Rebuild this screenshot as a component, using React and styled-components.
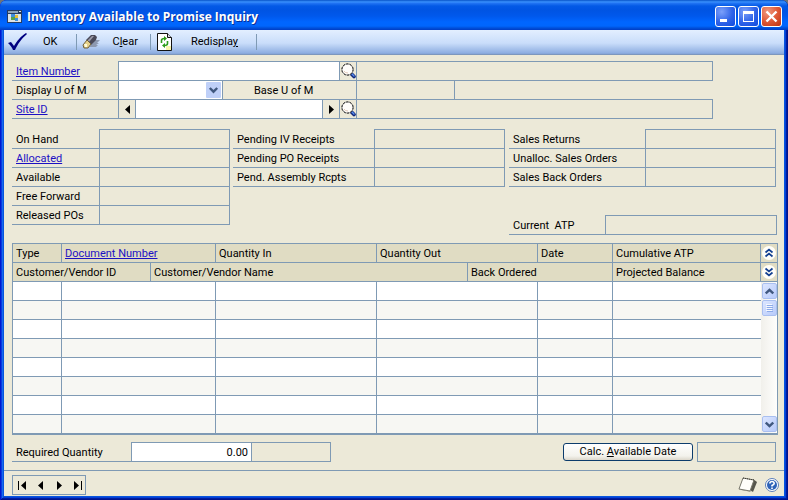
import React from "react";
import styled, { createGlobalStyle, css } from "styled-components";

const line = "#7f9ab4";
const face = "#ece9d8";

const Global = createGlobalStyle`
  *, *::before, *::after { box-sizing: border-box; }
  body {
    margin: 0;
    background: #6f7477;
    color: #000;
    font: 11px/16px Roboto, "Liberation Sans", sans-serif;
  }
  button, input, select { font: inherit; color: inherit; margin: 0; }
  button { padding: 0; border: 0; background: none; }
  svg { display: block; }
`;

const Window = styled.div`
  display: flex;
  flex-direction: column;
  min-height: 100vh;
  padding: 0 4px 4px;
  border-radius: 7px 7px 0 0;
  overflow: hidden;
  background: #0855dd;
  box-shadow: inset 1px 0 #0019cf, inset -1px -1px #00138c, inset 2px 0 #0a3be0,
    inset -2px -2px #001ea0, inset 3px 0 #166aee, inset -3px -3px #0441d8;
`;

const TitleBar = styled.header`
  display: flex;
  align-items: center;
  gap: 5px;
  height: 30px;
  margin: 0 -4px;
  padding: 3px 6px 0 7px;
  background: linear-gradient(#0753c8 0, #3b93ff 2px, #2376f4 3px, #0359e6 6px, #0054e3 10px, #0058ec 16px, #0066ff 22px, #0066fd 26px, #0050da 28px, #003cc4 30px);
`;

const Title = styled.h1`
  flex: 1;
  margin: 0;
  color: #fff;
  font: 700 12px/18px "Open Sans", "Noto Sans", sans-serif;
  text-shadow: 1px 1px #0a2f96;
  white-space: nowrap;
`;

const Caption = styled.div`
  display: flex;
  gap: 2px;
`;

const CaptionButton = styled.button`
  width: 21px;
  height: 21px;
  border: 1px solid #fff;
  border-radius: 3px;
  background: ${(p) =>
    p.$close
      ? "radial-gradient(circle at 30% 25%, #ef9a80, #e05a38 50%, #bd3210)"
      : "radial-gradient(circle at 30% 25%, #7ba0fa, #2f63e8 55%, #0f4ade)"};
`;

const Toolbar = styled.div`
  display: flex;
  height: 25px;
  border-bottom: 1px solid #7d97bd;
  background: linear-gradient(#e3efff, #c9ddfa 55%, #8fafe2 95%, #84a3d6);
`;

const Tool = styled.button`
  display: flex;
  align-items: center;
  gap: ${(p) => p.$gap}px;
  padding: 0 ${(p) => p.$end}px 0 ${(p) => p.$start}px;
`;

const Divider = styled.span`
  align-self: center;
  width: 1px;
  height: 16px;
  background: ${line};
`;

const Body = styled.main`
  display: flex;
  flex-direction: column;
  flex: 1;
  padding: 7px 6px 0 8px;
  background: ${face};
`;

const Form = styled.section`
  margin-right: 65px;
`;

const Row = styled.div`
  display: flex;
  height: 19px;
`;

const Label = styled.label`
  flex: 0 0 ${(p) => p.$width}px;
  padding: 2px 0 0 ${(p) => p.$indent ?? 4}px;
  border-bottom: 1px solid ${line};
  border-right: ${(p) => (p.$divided ? `1px solid ${line}` : "0")};
  white-space: pre;
`;

const Link = styled.a`
  color: #1c10c4;
  text-decoration: underline;
`;

const cell = css`
  min-width: 0;
  height: 20px;
  margin-top: -1px;
  border: 1px solid ${line};
  border-left-width: ${(p) => (p.$joined ? 0 : 1)}px;
  border-radius: 0;
  outline: 0;
`;

const Field = styled.input`
  ${cell}
  flex: ${(p) => (p.$width ? `0 0 ${p.$width}px` : "1 1 0")};
  width: 0;
  padding: 0 3px;
  background: ${(p) => (p.readOnly ? "transparent" : "#fff")};
  text-align: ${(p) => (p.$number ? "right" : "left")};
`;

const CellButton = styled.button`
  ${cell}
  display: flex;
  flex: 0 0 ${(p) => p.$width ?? 17}px;
  align-items: center;
  justify-content: center;
`;

const SelectBox = styled.span`
  ${cell}
  display: grid;
  flex: 0 0 105px;
  align-items: center;
  background: #fff;
  & > * { grid-area: 1 / 1; }
  & > svg { justify-self: end; margin-right: 1px; pointer-events: none; }
`;

const Select = styled.select`
  appearance: none;
  width: 100%;
  height: 18px;
  border: 0;
  background: transparent;
`;

const Stats = styled.section`
  display: grid;
  grid-template-columns: 218fr 272fr 268fr;
  column-gap: 3px;
  margin: 11px 2px 0 0;
`;

const StatColumn = styled.div`
  padding-left: ${(p) => (p.$inset ? 1 : 0)}px;
`;

const CurrentRow = styled(Row)`
  margin: 29px -1px 0 0;
`;

const Grid = styled.section`
  display: flex;
  margin-top: 8px;
  border: 1px solid ${line};
  border-bottom-width: 2px;
`;

const Table = styled.table`
  flex: 1;
  width: 0;
  table-layout: fixed;
  border-collapse: separate;
  border-spacing: 0;
`;

const Head = styled.th`
  height: 19px;
  padding: 2px 0 0 3px;
  border: solid ${line};
  border-width: 0 1px 1px 0;
  background: #e0dcc3;
  font-weight: 400;
  text-align: left;
  white-space: nowrap;
`;

const Cell = styled.td`
  height: 19px;
  padding: 0;
  border: solid ${line};
  border-width: 0 1px 1px 0;
  tr:nth-child(even) > & { background: #f7f7f3; }
  tr:nth-child(odd) > & { background: #fff; }
  tr:last-child > & { height: 18px; border-bottom: 0; }
  &:last-child { border-right: 0; }
`;

const Side = styled.div`
  display: flex;
  flex-direction: column;
  flex: 0 0 16px;
`;

const Expand = styled.button`
  display: flex;
  align-items: center;
  justify-content: center;
  height: 19px;
  border-bottom: 1px solid ${line};
  background: #e0dcc3;
`;

const ScrollTrack = styled.div`
  display: flex;
  flex: 1;
  flex-direction: column;
  align-items: center;
  gap: 1px;
  padding: 1px 0;
  background: linear-gradient(90deg, #f1f0eb, #fefefc);
`;

const ScrollPart = styled.button`
  display: flex;
  align-items: center;
  justify-content: center;
  width: 15px;
  height: 16px;
  margin-top: ${(p) => (p.$last ? "auto" : 0)};
  border: 1px solid #a9bff0;
  border-radius: 2px;
  background: linear-gradient(135deg, #dce6ff, #b7cafa);
`;

const Required = styled(Row)`
  margin: 8px 2px 8px 0;
`;

const Spacer = styled.span`
  flex: 1;
`;

const PushButton = styled.button`
  width: 130px;
  height: 18px;
  margin-right: 4px;
  border: 1px solid #0c3c6c;
  border-radius: 3px;
  background: linear-gradient(#fff, #f3f2ec 75%, #dcd7cb);
  white-space: nowrap;
`;

const StatusBar = styled.footer`
  display: flex;
  align-items: center;
  margin: 0 -6px 0 -8px;
  padding: 4px 5px 1px 8px;
  border-top: 1px solid ${line};
`;

const Navigator = styled.nav`
  display: flex;
  justify-content: space-between;
  width: 74px;
  height: 20px;
  padding: 0 0 0 2px;
  border: 1px solid ${line};
`;

const IconButton = styled.button`
  display: flex;
  align-items: center;
  justify-content: center;
  min-width: 14px;
  margin-left: ${(p) => p.$gap ?? 0}px;
`;

const AppIcon = () => (
  <svg width="15" height="13" viewBox="0 0 15 13" shapeRendering="crispEdges" aria-hidden="true">
    <path fill="#263c63" d="M0 0h15v13H0z" />
    <path fill="#8ba3bb" d="M1 1h10v2H1z" />
    <path fill="#dce3e6" d="M12 1h2v1h-2zM1 4h13v8H1z" />
    <path fill="#3f8fdc" d="M4 4h4v3H4zM8 8h3v3H8z" />
    <path fill="#e8bd31" d="M8 5h3v3H8z" />
    <path fill="#55a04c" d="M4 7h4v3H4z" />
  </svg>
);

const Check = () => (
  <svg width="19" height="18" viewBox="0 0 19 18" aria-hidden="true">
    <path fill="#000080" d="M0 10 3 9l3 4C9 8 12 4 18 0l1 1C13 6 10 11 7 17H5C4 14 2 12 0 10Z" />
  </svg>
);

const Eraser = () => (
  <svg width="18" height="14" viewBox="0 0 18 14" aria-hidden="true">
    <path fill="#8d99b0" d="M7 12 13 5h5l-3 3h2l-3 2h2l-2 2Z" />
    <path fill="#494958" d="M9 0h4l2 2-1 3-5 5-5-5Z" />
    <path fill="#9c9baa" d="m10 1-5 5 2 1 5-6Z" />
    <path fill="#e7d28a" stroke="#71613b" d="m5 5 4 4-3 4H2L1 10Z" />
    <path fill="#fffbd8" d="M2 9h3v3H3Z" />
  </svg>
);

const Refresh = () => (
  <svg width="15" height="18" viewBox="0 0 15 18" aria-hidden="true">
    <path fill="#fff" stroke="#111" d="M.5.5h10l4 4v13H.5Z" />
    <path fill="#d7dce6" stroke="#111" d="M10.500.5v4h4" />
    <path fill="#f8f6ae" d="M9 13h5v4H9z" />
    <path fill="none" stroke="#2c9c1c" strokeWidth="1.600" d="M4.500 10V7.500q0-2 3-2M10.500 8v2.500q0 2-3 2" />
    <path fill="#2c9c1c" d="m7 3 3 2.500L7 8ZM8 10l-3 2.500L8 15Z" />
  </svg>
);

const Lens = () => (
  <svg width="15" height="16" viewBox="0 0 15 16" aria-hidden="true">
    <path stroke="#12297c" strokeWidth="3.600" strokeLinecap="round" d="m10.500 11 2.500 2.500" />
    <path stroke="#5b8ff0" strokeWidth="1.400" strokeLinecap="round" d="m11 11 2 2" />
    <circle cx="6.500" cy="6.500" r="5.600" fill="#fffdfa" stroke="#8a8a88" />
    <circle cx="6.500" cy="6.500" r="5.600" fill="none" stroke="#1c1c1c" strokeDasharray="2 1.500" />
    <path fill="none" stroke="#e3c9b9" d="M3 8q1 2 4 2" />
  </svg>
);

const Triangle = ({ left, bar }) => (
  <svg width={bar ? 9 : 5} height="9" viewBox={bar ? "0 0 9 9" : "0 0 5 9"} aria-hidden="true">
    <path d={left ? (bar ? "M0 0h1v9H0zM8 0v9L3 4.500Z" : "M5 0v9L0 4.500Z") : bar ? "M8 0h1v9H8zM1 0v9l5-4.500Z" : "M0 0v9l5-4.500Z"} />
  </svg>
);

const Chevron = ({ up }) => (
  <svg width="9" height="7" viewBox="0 0 9 7" aria-hidden="true">
    <path fill="none" stroke="#40587f" strokeWidth="2.400" d={up ? "M.8 5.500 4.500 2l3.700 3.500" : "M.8 1.500 4.500 5l3.700-3.500"} />
  </svg>
);

const DropArrow = () => (
  <svg width="15" height="16" viewBox="0 0 15 16" aria-hidden="true">
    <rect width="15" height="16" rx="1" fill="#bfd0f8" />
    <path fill="none" stroke="#40587f" strokeWidth="2.400" d="m3.800 6 3.700 3.700L11.200 6" />
  </svg>
);

const DoubleChevron = ({ up }) => (
  <svg width="14" height="14" viewBox="0 0 14 14" aria-hidden="true">
    <circle cx="7" cy="7" r="7" fill="#fffef8" />
    <path
      fill="none"
      stroke="#123f91"
      strokeWidth="1.700"
      d={up ? "m3.500 6.500 3.500-3 3.500 3M3.500 10.500l3.500-3 3.500 3" : "m3.500 3.500 3.500 3 3.500-3M3.500 7.500l3.500 3 3.500-3"}
    />
  </svg>
);

const Grip = () => (
  <svg width="7" height="8" viewBox="0 0 7 8" shapeRendering="crispEdges" aria-hidden="true">
    <path stroke="#f4f7ff" d="M0 .5h6M0 2.500h6M0 4.500h6M0 6.500h6" />
    <path stroke="#8caae8" d="M1 1.500h6M1 3.500h6M1 5.500h6M1 7.500h6" />
  </svg>
);

const Note = () => (
  <svg width="20" height="16" viewBox="0 0 20 16" aria-hidden="true">
    <path fill="#55554c" d="m15 2 4 3-4 10-3-2Z" />
    <path fill="#969487" d="m0 12 12 2 2 1-11-2Z" />
    <path fill="#fffefa" stroke="#77766b" d="m5 1 11 2-4 11-11-2Z" />
    <path stroke="#37372f" strokeDasharray="1 1" d="m5 1 11 2" />
  </svg>
);

const Help = () => (
  <svg width="14" height="14" viewBox="0 0 14 14" aria-hidden="true">
    <circle cx="7" cy="7" r="6.500" fill="#fff" stroke="#5c7fba" />
    <circle cx="7" cy="7" r="5" fill="#2d62b8" />
    <path fill="none" stroke="#fff" strokeWidth="1.600" d="M4.800 5.500Q5 3.500 7 3.500T9.200 5.500Q9.200 6.500 7 7.500V8.500M7 9.500V11" />
  </svg>
);

const Stat = ({ id, text, width, link }) => (
  <Row>
    <Label htmlFor={id} $width={width}>
      {link ? <Link href="#allocated">{text}</Link> : text}
    </Label>
    <Field id={id} readOnly />
  </Row>
);

const columns = [49, 89, 65, 161, 91, 70, 75];
const spans = [1, 2, 1, 2, 1, 1];

export default function App() {
  return (
    <>
      <Global />
      <Window>
        <TitleBar>
          <AppIcon />
          <Title>Inventory Available to Promise Inquiry</Title>
          <Caption>
            <CaptionButton aria-label="Minimize">
              <svg width="19" height="19" viewBox="0 0 19 19"><path fill="#fff" d="M4 12h7v3H4z" /></svg>
            </CaptionButton>
            <CaptionButton aria-label="Maximize">
              <svg width="19" height="19" viewBox="0 0 19 19"><path fill="#fff" fillRule="evenodd" d="M4 4h11v11H4zm1 3v7h9V7z" /></svg>
            </CaptionButton>
            <CaptionButton aria-label="Close" $close>
              <svg width="19" height="19" viewBox="0 0 19 19"><path stroke="#fff" strokeWidth="2.400" d="m4.500 4.500 10 10m0-10-10 10" /></svg>
            </CaptionButton>
          </Caption>
        </TitleBar>
        <Toolbar>
          <Tool $start={4} $gap={16} $end={19}><Check /><span>OK</span></Tool>
          <Divider />
          <Tool $start={5} $gap={12} $end={12}><Eraser /><span>C<u>l</u>ear</span></Tool>
          <Divider />
          <Tool $start={6} $gap={19} $end={18}><Refresh /><span>Redispla<u>y</u></span></Tool>
          <Divider />
        </Toolbar>
        <Body>
          <Form>
            <Row>
              <Label htmlFor="item" $width={106}><Link href="#item">Item Number</Link></Label>
              <Field id="item" $width={222} />
              <CellButton aria-label="Look up item" $joined><Lens /></CellButton>
              <Field aria-label="Item description" readOnly $joined />
            </Row>
            <Row>
              <Label htmlFor="uom" $width={106}>Display U of M</Label>
              <SelectBox>
                <Select id="uom"><option /></Select>
                <DropArrow />
              </SelectBox>
              <Label htmlFor="base" $width={134} $indent={31} $divided>Base U of M</Label>
              <Field id="base" $width={98} readOnly $joined />
            </Row>
            <Row>
              <Label htmlFor="site" $width={106}><Link href="#site">Site ID</Link></Label>
              <CellButton aria-label="Previous site" $width={18}><Triangle left /></CellButton>
              <Field id="site" $width={187} $joined />
              <CellButton aria-label="Next site" $joined><Triangle /></CellButton>
              <CellButton aria-label="Look up site" $joined><Lens /></CellButton>
              <Field aria-label="Site description" readOnly $joined />
            </Row>
          </Form>
          <Stats>
            <StatColumn>
              <Stat id="hand" width={87} text="On Hand" />
              <Stat id="allocated" width={87} text="Allocated" link />
              <Stat id="available" width={87} text="Available" />
              <Stat id="forward" width={87} text="Free Forward" />
              <Stat id="released" width={87} text="Released POs" />
            </StatColumn>
            <StatColumn>
              <Stat id="iv" width={141} text="Pending IV Receipts" />
              <Stat id="po" width={141} text="Pending PO Receipts" />
              <Stat id="assembly" width={141} text="Pend. Assembly Rcpts" />
            </StatColumn>
            <StatColumn $inset>
              <Stat id="returns" width={136} text="Sales Returns" />
              <Stat id="unalloc" width={136} text="Unalloc. Sales Orders" />
              <Stat id="back" width={136} text="Sales Back Orders" />
              <CurrentRow>
                <Label htmlFor="atp" $width={96}>{"Current  ATP"}</Label>
                <Field id="atp" readOnly />
              </CurrentRow>
            </StatColumn>
          </Stats>
          <Grid>
            <Table>
              <colgroup>
                {columns.map((w, i) => <col key={i} width={w} />)}
                <col />
              </colgroup>
              <thead>
                <tr>
                  <Head>Type</Head>
                  <Head colSpan={2}><Link href="#document">Document Number</Link></Head>
                  <Head>Quantity In</Head>
                  <Head colSpan={2}>Quantity Out</Head>
                  <Head>Date</Head>
                  <Head>Cumulative ATP</Head>
                </tr>
                <tr>
                  <Head colSpan={2}>Customer/Vendor ID</Head>
                  <Head colSpan={3}>Customer/Vendor Name</Head>
                  <Head colSpan={2}>Back Ordered</Head>
                  <Head>Projected Balance</Head>
                </tr>
              </thead>
              <tbody>
                {Array.from({ length: 8 }, (_, r) => (
                  <tr key={r}>{spans.map((s, c) => <Cell key={c} colSpan={s} />)}</tr>
                ))}
              </tbody>
            </Table>
            <Side>
              <Expand aria-label="Hide details"><DoubleChevron up /></Expand>
              <Expand aria-label="Show details"><DoubleChevron /></Expand>
              <ScrollTrack>
                <ScrollPart aria-label="Scroll up"><Chevron up /></ScrollPart>
                <ScrollPart aria-label="Scroll position"><Grip /></ScrollPart>
                <ScrollPart aria-label="Scroll down" $last><Chevron /></ScrollPart>
              </ScrollTrack>
            </Side>
          </Grid>
          <Required>
            <Label htmlFor="required" $width={119}>Required Quantity</Label>
            <Field id="required" $width={121} $number defaultValue="0.00" />
            <Field aria-label="Unit" $width={79} readOnly $joined />
            <Spacer />
            <PushButton>Calc. <u>A</u>vailable Date</PushButton>
            <Field aria-label="Available date" $width={79} readOnly />
          </Required>
          <StatusBar>
            <Navigator aria-label="Records">
              <IconButton aria-label="First"><Triangle left bar /></IconButton>
              <IconButton aria-label="Previous"><Triangle left /></IconButton>
              <IconButton aria-label="Next"><Triangle /></IconButton>
              <IconButton aria-label="Last"><Triangle bar /></IconButton>
            </Navigator>
            <Spacer />
            <IconButton aria-label="Note"><Note /></IconButton>
            <IconButton aria-label="Help" $gap={7}><Help /></IconButton>
          </StatusBar>
        </Body>
      </Window>
    </>
  );
}
